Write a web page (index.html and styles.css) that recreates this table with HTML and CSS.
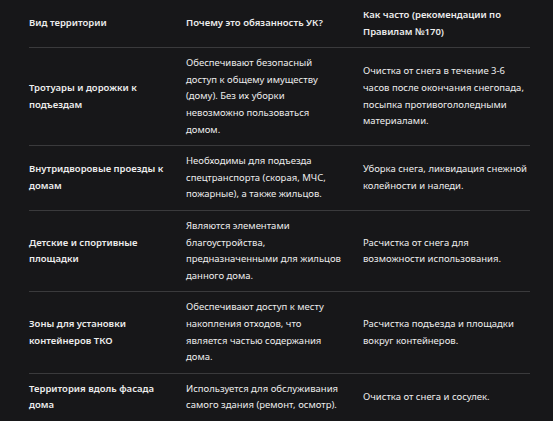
FILE: index.html
```html
<!DOCTYPE html>
<html lang="ru">
<head>
<meta charset="utf-8">
<link rel="stylesheet" href="styles.css">
</head>
<body>
<table class="grid">
  <colgroup>
    <col class="c1"><col class="c2"><col class="c3">
  </colgroup>
  <thead>
    <tr>
      <th>Вид территории</th>
      <th>Почему это обязанность УК?</th>
      <th>Как часто (рекомендации по Правилам №170)</th>
    </tr>
  </thead>
  <tbody>
    <tr>
      <td class="name">Тротуары и дорожки к подъездам</td>
      <td>Обеспечивают безопасный доступ к общему имуществу (дому). Без их уборки невозможно пользоваться домом.</td>
      <td>Очистка от снега в течение 3&#8209;6 часов после окончания снегопада, посыпка противогололедными материалами.</td>
    </tr>
    <tr>
      <td class="name">Внутридворовые проезды к домам</td>
      <td>Необходимы для подъезда спецтранспорта (скорая, МЧС, пожарные), а также жильцов.</td>
      <td>Уборка снега, ликвидация снежной колейности и наледи.</td>
    </tr>
    <tr>
      <td class="name">Детские и спортивные площадки</td>
      <td>Являются элементами благоустройства, предназначенными для жильцов данного дома.</td>
      <td>Расчистка от снега для возможности использования.</td>
    </tr>
    <tr>
      <td class="name">Зоны для установки контейнеров ТКО</td>
      <td>Обеспечивают доступ к месту накопления отходов, что является частью содержания дома.</td>
      <td>Расчистка подъезда и площадки вокруг контейнеров.</td>
    </tr>
    <tr>
      <td class="name">Территория вдоль фасада дома</td>
      <td>Используется для обслуживания самого здания (ремонт, осмотр).</td>
      <td>Очистка от снега и сосулек.</td>
    </tr>
  </tbody>
</table>
</body>
</html>
```
FILE: styles.css
```css
html, body {
  margin: 0;
  padding: 0;
  background: #171719;
}
body {
  padding: 0 0 0 29px;
  font-family: "Noto Sans", "Open Sans", sans-serif;
  font-size: 9.5px;
  line-height: 16.6px;
  color: #ededed;
}
.grid {
  border-collapse: collapse;
  table-layout: fixed;
  width: 501px;
}
.c1 { width: 157px; }
.c2 { width: 177px; }
.c3 { width: 167px; }
.grid th,
.grid td {
  padding: 7px 16px 7px 0;
  text-align: left;
  vertical-align: middle;
  border-bottom: 1px solid #3a3a3c;
}
.grid th:nth-child(2),
.grid td:nth-child(2) {
  padding-right: 20px;
}
.grid th:last-child,
.grid td:last-child {
  padding-right: 2px;
}
.grid th {
  font-weight: 600;
}
.grid td {
  font-weight: 400;
}
.grid td.name {
  font-weight: 600;
}
```
